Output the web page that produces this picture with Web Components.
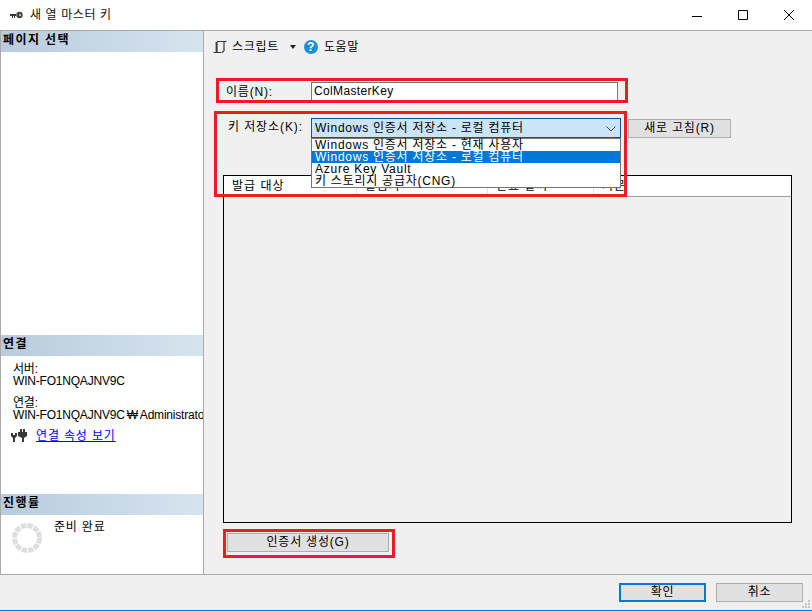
<!DOCTYPE html>
<html lang="ko"><head><meta charset="utf-8">
<style>
html,body{margin:0;padding:0;width:812px;height:611px;overflow:hidden;background:#f0f0f0}
body{font:12px/14px "Liberation Sans","Noto Sans CJK KR",sans-serif;color:#000}
</style></head><body>
<master-key-dialog></master-key-dialog>
<script>
function def(name,html){customElements.define(name,class extends HTMLElement{constructor(){super();this.attachShadow({mode:'open'}).innerHTML=html}})}
def('title-bar',`<style>
:host{display:flex;align-items:center;height:30px;background:#fff;border-bottom:1px solid #a9a9a9}
svg{display:block}
.ic{margin-left:10px;width:13px;height:8px;margin-right:7px}
.t{font-size:12px;letter-spacing:.6px;color:#111;flex:1}
.b{width:46px;height:30px;display:flex;align-items:center;justify-content:center}
</style>
<svg class="ic" viewBox="0 0 13 8"><path d="M0 3h6v2H5v2H4V5H3v2H2V5H0z" fill="#333"/><circle cx="9.5" cy="4" r="3.2" fill="#444"/><circle cx="10" cy="4" r="1" fill="#ddd"/></svg>
<span class="t"><slot></slot></span>
<span class="b"><svg width="10" height="10"><path d="M0 6.5h10" stroke="#000" fill="none"/></svg></span>
<span class="b"><svg width="10" height="10"><path d="M.5.5h9v9h-9z" stroke="#000" fill="none"/></svg></span>
<span class="b"><svg width="10" height="10"><path d="M0 0l10 10M10 0L0 10" stroke="#000" fill="none"/></svg></span>`);
def('section-head',`<style>
:host{display:block;height:21px;background:linear-gradient(90deg,#b9cbdc,#d7e4f0);font-weight:bold;font-size:12px;line-height:18px;padding-left:2px;letter-spacing:1.4px;color:#000}
</style><slot></slot>`);
def('side-panel',`<style>
:host{display:flex;flex-direction:column;width:202px;background:#fff;border-left:1px solid #a9a9a9;border-right:1px solid #a9a9a9;height:543px;flex:none;overflow:hidden}
.sp{flex:none}
.conn{height:138px;padding:7px 0 0 12px;box-sizing:border-box;line-height:12px;white-space:nowrap;overflow:hidden;letter-spacing:-.2px}
.conn div{height:12px}
.won{padding:0 2px}
.lnk{display:flex;align-items:center;margin:9px 0 0 -2px;height:16px;letter-spacing:0}
.lnk a{color:#00f;text-decoration:underline;margin-left:9px;letter-spacing:.85px}
.prog{flex:1;display:flex;align-items:flex-start;padding:6px 0 0 11px}
.prog span{margin:0 0 0 12px;letter-spacing:.8px;line-height:13px}
</style>
<section-head>페이지 선택</section-head>
<div class="sp" style="height:283px"></div>
<section-head>연결</section-head>
<div class="conn">
<div>서버:</div><div>WIN-FO1NQAJNV9C</div>
<div style="margin-top:10px">연결:</div><div>WIN-FO1NQAJNV9C<span class="won">₩</span>Administrator</div>
<div class="lnk"><svg width="16" height="14" viewBox="0 0 16 14"><path d="M0 4h2v2h2V4h2v3L4 9v4H2V9L0 7zM9 0h2v3h1V0h2v3h2v4l-3 2v4h-2V9L7 7V3h2z" fill="#383838"/></svg><a>연결 속성 보기</a></div>
</div>
<section-head>진행률</section-head>
<div class="prog"><svg width="30" height="30" viewBox="0 0 30 30" style="margin-top:2px"><circle cx="15" cy="15" r="12.5" fill="none" stroke="#dedede" stroke-width="5" stroke-dasharray="5.5 1.04"/></svg><span>준비 완료</span></div>`);
def('x-btn',`<style>
:host{display:flex;align-items:center;justify-content:center;box-sizing:border-box;background:#e1e1e1;border:1px solid #adadad;font-size:12px;letter-spacing:.8px;color:#000;padding-bottom:1px}
:host([primary]){border:2px solid #0078d7}
</style><slot></slot>`);
def('text-field',`<style>
:host{display:block;box-sizing:border-box;background:#fff;border:1px solid #7a7a7a;height:21px;padding:0 2px;line-height:16px;letter-spacing:.35px}
</style><slot></slot>`);
def('store-combo',`<style>
:host{display:block;position:relative;width:310px;height:20px;box-sizing:border-box;background:#cce4f7;border:1px solid #005499;line-height:18px;padding-left:3px;letter-spacing:.75px;flex:none}
svg{position:absolute;right:4px;top:7px}
.list{position:absolute;left:-1px;top:19px;width:310px;height:50px;box-sizing:border-box;background:#fff;border:1px solid #767676;line-height:12px;z-index:3}
.list div{height:12px;padding-left:3px;white-space:nowrap}
.list .s{background:#0078d7;color:#fff}
</style><slot></slot><svg width="10" height="6"><path d="M.5.5L5 5 9.5.5" stroke="#444" fill="none"/></svg>
<div class="list"><div>Windows 인증서 저장소 - 현재 사용자</div><div class="s">Windows 인증서 저장소 - 로컬 컴퓨터</div><div>Azure Key Vault</div><div>키 스토리지 공급자(CNG)</div></div>`);
def('cert-grid',`<style>
:host{display:block;box-sizing:border-box;background:#f0f0f0;border:1px solid #000;height:348px;width:569px}
.h{display:flex;height:20px;background:#fff;border-bottom:1px solid #a0a0a0;line-height:21px;letter-spacing:1px}
.h span{box-sizing:border-box;border-right:1px solid #e4e4e4;padding-left:8px;flex:none;white-space:nowrap}
</style><div class="h"><span style="width:133px">발급 대상</span><span style="width:131px">발급자</span><span style="width:106px">만료 날짜</span><span style="width:60px;border:0">지문</span></div>`);
def('red-box',`<style>
:host{display:block;position:absolute;box-sizing:border-box;border:3px solid #ed1c24;pointer-events:none;z-index:5}
</style>`);
def('master-key-dialog',`<style>
:host{display:block;position:relative;width:812px;height:611px;background:#f0f0f0;overflow:hidden}
.main{display:flex;height:543px;border-bottom:1px solid #a9a9a9}
.pane{flex:1;display:flex;flex-direction:column;align-items:flex-start;min-width:0;padding-left:9px}
.tb{display:flex;align-items:center;height:15px;margin-top:8px;font-size:12px;letter-spacing:.7px}
.tb .c{margin:0 8px 0 11px;width:0;height:0;border:3.5px solid transparent;border-top:4px solid #222;border-bottom:0}
.r1{display:flex;align-items:center;margin:28px 0 0 13px;height:21px}
.r1 label{width:85px;letter-spacing:.8px;margin-top:-2px}
.r1 text-field{width:307px}
.r2{display:flex;align-items:center;height:20px;margin:15px 0 0 15px}
.r2 label{width:83px;letter-spacing:.9px;flex:none;margin-top:-2px}
.r2 x-btn{width:103px;height:19px;margin-left:7px;align-self:flex-end}
cert-grid{margin:37px 0 0 10px}
.gen{margin:10px 0 0 14px;width:162px;height:19px}
.foot{display:flex;justify-content:flex-end;height:36px;padding:8px 9px 0 0;box-sizing:border-box;position:relative}
.foot x-btn{width:87px;height:19px;margin-left:10px}
.line{position:absolute;left:0;right:0;bottom:0;height:1px;background:#0078d7}
.grip{position:absolute;right:2px;bottom:3px}
</style>
<title-bar>새 열 마스터 키</title-bar>
<div class="main">
<side-panel></side-panel>
<div class="pane">
<div class="tb"><svg width="14" height="14" viewBox="0 0 14 14" style="margin-right:5px"><path d="M4 1.5h9.5M4 2v10M3.2 1.8v10M0.5 12.5h8M11 2v9M9 12.5l2-1.5" fill="none" stroke="#3a3a3a" stroke-width="1.2"/></svg><span>스크립트</span><span class="c"></span><svg width="14" height="14" style="margin:0 6px 0 0" viewBox="0 0 14 14"><circle cx="7" cy="7" r="7" fill="#1e8fd5"/><text x="7" y="11.2" font-size="12" font-weight="bold" text-anchor="middle" fill="#fff" font-family="Liberation Sans">?</text></svg><span style="letter-spacing:.6px">도움말</span></div>
<div class="r1"><label>이름(N):</label><text-field>ColMasterKey</text-field></div>
<div class="r2"><label>키 저장소(K):</label><store-combo>Windows 인증서 저장소 - 로컬 컴퓨터</store-combo><x-btn>새로 고침(R)</x-btn></div>
<cert-grid></cert-grid>
<x-btn class="gen">인증서 생성(G)</x-btn>
</div>
</div>
<div class="foot"><x-btn primary>확인</x-btn><x-btn>취소</x-btn><div class="line"></div>
<svg class="grip" width="8" height="8"><path d="M6 0h2v2H6zM3 3h2v2H3zM6 3h2v2H6zM0 6h2v2H0zM3 6h2v2H3zM6 6h2v2H6z" fill="#c4c4c4"/></svg></div>
<red-box style="left:216px;top:78px;width:412px;height:25px"></red-box>
<red-box style="left:214px;top:111px;width:413px;height:86px"></red-box>
<red-box style="left:223px;top:529px;width:172px;height:29px"></red-box>`);
</script>
</body></html>
